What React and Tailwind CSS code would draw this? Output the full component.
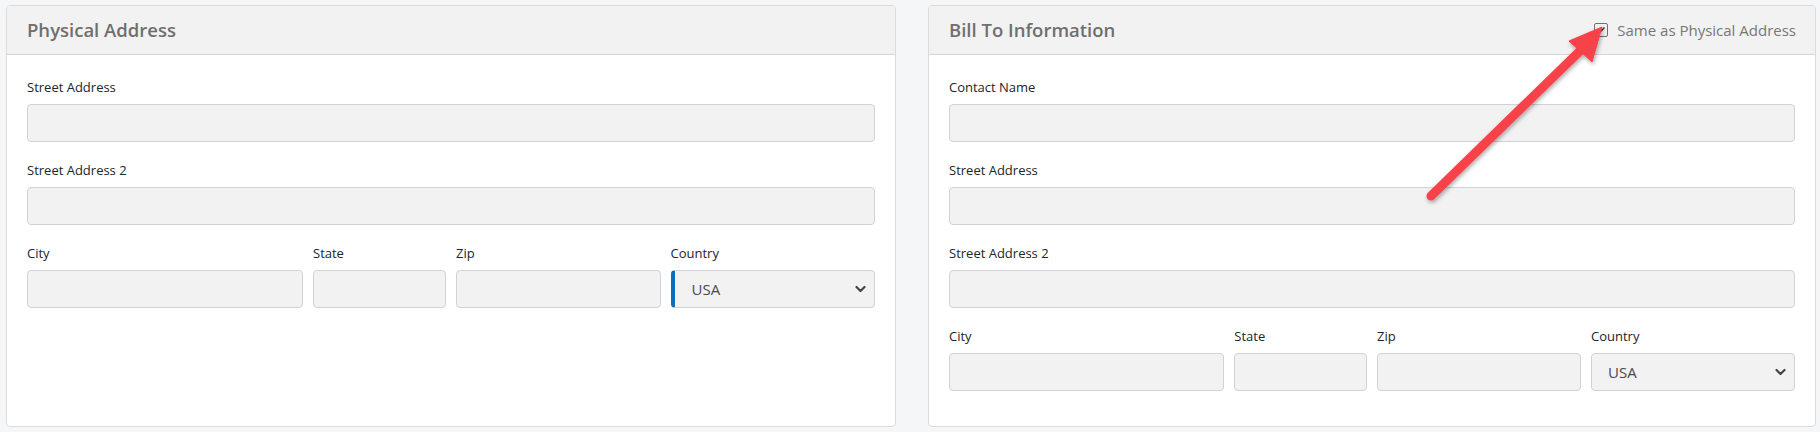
import React from "react";

const font = { fontFamily: '"Open Sans", "Liberation Sans", sans-serif' };

function Field({ label, children }) {
    return (
        <div className="flex flex-col">
            <label className="text-[13px] leading-[20px] text-[#212529] mb-[7px]">{label}</label>
            {children}
        </div>
    );
}

function TextInput() {
    return <input type="text" className="h-[38px] w-full rounded-[4px] border border-[#cfd2d6] bg-[#f2f2f2] px-3 outline-none" />;
}

function CountrySelect({ accent }) {
    return (
        <div
            className={`flex h-[38px] w-full items-center justify-between rounded-[4px] border border-[#cfd2d6] bg-[#f2f2f2] pr-[8px] ${
                accent ? "border-l-[4px] border-l-[#0b6fbd] pl-[17px]" : "pl-[16px]"
            }`}
        >
            <span className="text-[15px] text-[#4a4a4a]">USA</span>
            <svg width="11" height="8" viewBox="0 0 11 8" fill="none">
                <path d="M1.5 2l4 4 4-4" stroke="#444" strokeWidth="2.2" strokeLinecap="round" strokeLinejoin="round" />
            </svg>
        </div>
    );
}

function CityRow({ accent }) {
    return (
        <div className="grid grid-cols-12 gap-x-[10px]">
            <div className="col-span-4">
                <Field label="City"><TextInput /></Field>
            </div>
            <div className="col-span-2">
                <Field label="State"><TextInput /></Field>
            </div>
            <div className="col-span-3">
                <Field label="Zip"><TextInput /></Field>
            </div>
            <div className="col-span-3">
                <Field label="Country"><CountrySelect accent={accent} /></Field>
            </div>
        </div>
    );
}

function Card({ title, right, className = "flex-1", children }) {
    return (
        <div className={`${className} rounded-[4px] border border-[#d9dbde] bg-white overflow-hidden`}>
            <div className="flex h-[49px] items-center justify-between border-b border-[#d6d6d6] bg-[#f2f2f2] pl-[20px] pr-[19px]">
                <h2 className="text-[18.5px] font-semibold text-[#6f6f6f]">{title}</h2>
                {right}
            </div>
            <div className="flex flex-col gap-[18px] px-[20px] pt-[22px] pb-[34px]">{children}</div>
        </div>
    );
}

export default function App() {
    return (
        <div style={font} className="relative h-[432px] w-[1820px] bg-[#f5f6f8] pl-[6px] pr-[4px] pt-[5px] pb-[5px]">
            <div className="flex h-full items-stretch gap-[32px]">
                <Card title="Physical Address" className="w-[890px] shrink-0">
                    <Field label="Street Address"><TextInput /></Field>
                    <Field label="Street Address 2"><TextInput /></Field>
                    <CityRow accent />
                </Card>

                <Card
                    title="Bill To Information"
                    right={
                        <label className="flex items-center gap-[9px] text-[15px] text-[#777]">
                            <span className="flex h-[14px] w-[14px] items-center justify-center rounded-[2px] border border-[#707070] bg-[#f2f2f2]">
                                <svg width="10" height="10" viewBox="0 0 10 10" fill="none">
                                    <path d="M1.5 5.2l2.3 2.3L8.5 2.5" stroke="#333" strokeWidth="1.4" />
                                </svg>
                            </span>
                            Same as Physical Address
                        </label>
                    }
                >
                    <Field label="Contact Name"><TextInput /></Field>
                    <Field label="Street Address"><TextInput /></Field>
                    <Field label="Street Address 2"><TextInput /></Field>
                    <CityRow />
                </Card>
            </div>

            {/* annotation arrow */}
            <svg className="pointer-events-none absolute inset-0" width="1820" height="432">
                <defs>
                    <filter id="shadow" x="-20%" y="-20%" width="140%" height="140%">
                        <feDropShadow dx="1" dy="2" stdDeviation="2" floodColor="#000" floodOpacity="0.35" />
                    </filter>
                </defs>
                <g filter="url(#shadow)" fill="#f8424a" stroke="#f8424a">
                    <line x1="1431" y1="196" x2="1584" y2="47" strokeWidth="9" strokeLinecap="round" />
                    <polygon points="1602,27 1569,41 1592,62" strokeWidth="1" strokeLinejoin="round" />
                </g>
            </svg>
        </div>
    );
}
